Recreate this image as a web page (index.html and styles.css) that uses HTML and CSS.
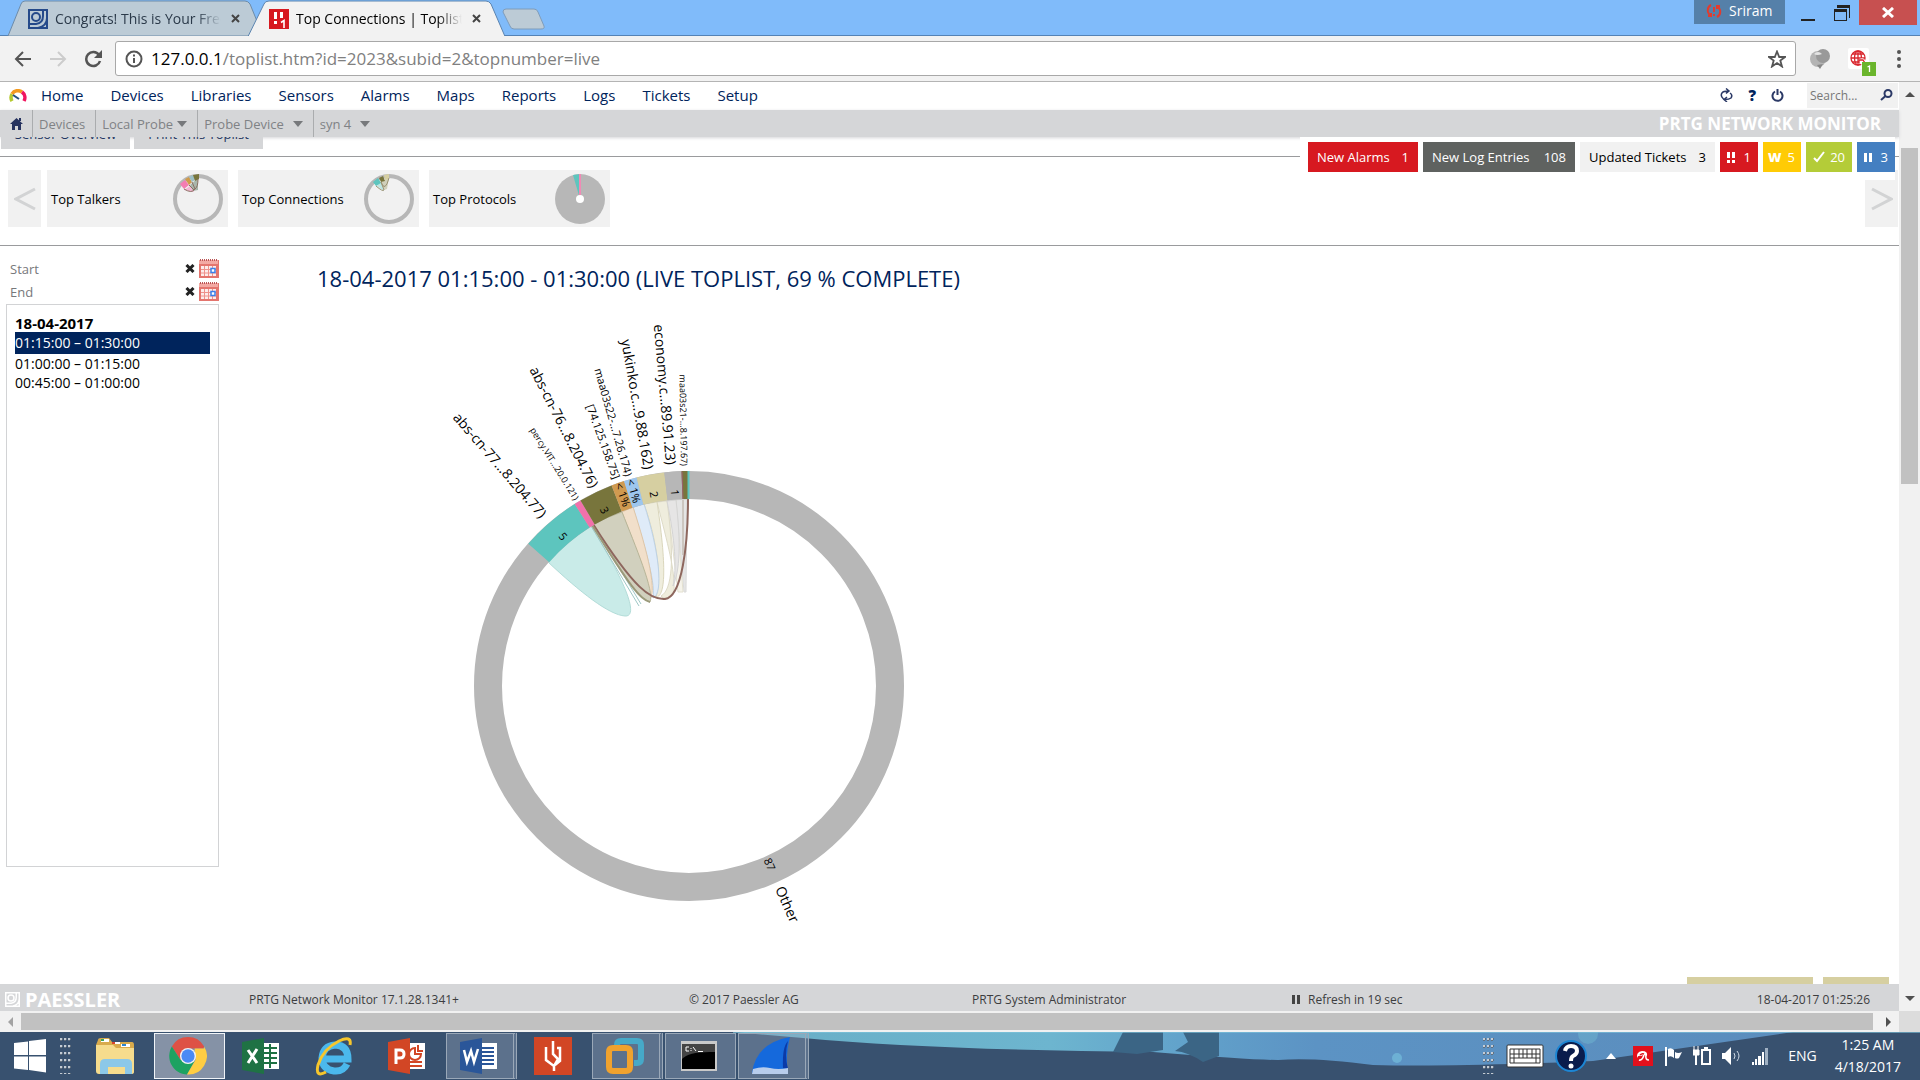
FILE: index.html
```
<!DOCTYPE html>
<html lang="en">
<head>
<meta charset="utf-8">
<title>Top Connections | Toplist</title>
<link rel="stylesheet" href="styles.css">
</head>
<body>
<header class="tabstrip">
  <svg class="tab-shapes" width="560" height="36" viewBox="0 0 560 36" aria-hidden="true">
    <path d="M8 36L21 4Q22 1 25 1H245Q248 1 250 4L263 36Z" fill="#bccbd6" stroke="#6d8ba8"/>
    <path d="M503 12Q503 9 506 9H534Q537 9 538 12L544 26Q545 29 541 29H514Q511 29 510 26Z" fill="#bccbd6" stroke="#7f9cba"/>
    <path d="M248 36.500L264 4Q265 1 269 1H486Q489 1 491 4L505 36.500Z" fill="#f2f2f2" stroke="#5b84b0"/>
  </svg>
  <div class="tab tab-back">
    <svg width="20" height="20" viewBox="0 0 20 20" fill="none" stroke="#254a8a" stroke-width="2"><path d="M1 1H19V19H1ZM1 15H8Q15 14 15 7V1M10 19Q19 17 19 9"/><circle cx="8" cy="8" r="4"/></svg>
    <span class="tab-title">Congrats! This is Your Free</span>
    <button class="tab-close" aria-label="Close tab"><svg width="9" height="9" viewBox="0 0 9 9"><path d="M1 1L8 8M8 1L1 8" stroke="#444" stroke-width="2"/></svg></button>
  </div>
  <div class="tab">
    <svg width="20" height="20" viewBox="0 0 20 20"><path fill="#d71920" d="M0 0H20V20H0Z"/><path fill="#fff" d="M5 3H8V10H5ZM11 3H14V9H11ZM5 12H8V15H5Z"/><path d="M12 13.500L15 11.500V19" stroke="#fff" stroke-width="1.600" fill="none"/></svg>
    <span class="tab-title">Top Connections | Toplist</span>
    <button class="tab-close" aria-label="Close tab"><svg width="9" height="9" viewBox="0 0 9 9"><path d="M1 1L8 8M8 1L1 8" stroke="#444" stroke-width="2"/></svg></button>
  </div>
  <div class="window-controls">
    <button class="profile"><svg width="16" height="16" viewBox="0 0 16 16" fill="none" stroke="#e23b2e" stroke-width="2"><path d="M5 2Q1 4 2 9Q3 12 5 13M2 13H5V10M11 14Q15 12 14 7Q13 4 11 3M14 3H11V6"/><path d="M8 4V9M8 11V13"/></svg>Sriram</button>
    <button class="win" aria-label="Minimize"><svg width="14" height="20" viewBox="0 0 14 20"><path fill="#222" d="M0 16H14V18H0Z"/></svg></button>
    <button class="win" aria-label="Restore"><svg width="16" height="16" viewBox="0 0 16 16"><path d="M3 0H16V13H15V3H3ZM0 4H13V16H0ZM1 7V15H12V7Z" fill="#222" fill-rule="evenodd"/></svg></button>
    <button class="win close" aria-label="Close"><svg width="12" height="11" viewBox="0 0 12 11"><path d="M1 1L11 10M11 1L1 10" stroke="#fff" stroke-width="3"/></svg></button>
  </div>
</header>

<div class="toolbar">
  <button aria-label="Back"><svg width="18" height="16" viewBox="0 0 18 16" fill="none" stroke="#555" stroke-width="2"><path d="M17 8H2M9 1L2 8L9 15"/></svg></button>
  <button aria-label="Forward"><svg width="18" height="16" viewBox="0 0 18 16" fill="none" stroke="#ccc" stroke-width="2"><path d="M1 8H16M9 1L16 8L9 15"/></svg></button>
  <button aria-label="Reload"><svg width="19" height="18" viewBox="0 0 19 18"><path d="M15 5A7 7 0 1 0 16 11" fill="none" stroke="#555" stroke-width="2.500"/><path d="M18 0V8H10Z" fill="#555"/></svg></button>
  <div class="address">
    <svg width="18" height="18" viewBox="0 0 18 18" fill="none" stroke="#555" stroke-width="2"><circle cx="9" cy="9" r="7.500"/><path d="M9 8V13M9 4.500V6.500"/></svg>
    <span class="url"><b>127.0.0.1</b>/toplist.htm?id=2023&amp;subid=2&amp;topnumber=live</span>
    <svg width="18" height="18" viewBox="0 0 18 18" fill="none" stroke="#555" stroke-width="1.800"><path d="M9 1.500L11.200 7H17L12.300 10.500L14 16.500L9 13L4 16.500L5.700 10.500L1 7H6.800Z"/></svg>
  </div>
  <button aria-label="Extension"><svg width="22" height="20" viewBox="0 0 22 20"><circle cx="9" cy="10" r="8" fill="#b4b4b4"/><circle cx="14" cy="7" r="7" fill="#999"/><path d="M5 5Q9 1 13 5Q8 7 5 5" fill="#e4e4e4"/><path d="M8 16L14 15L11 20Z" fill="#888"/></svg></button>
  <button class="ext2" aria-label="Extension"><svg width="28" height="28" viewBox="0 0 28 28"><rect width="21" height="21" rx="2" fill="#fff"/><g fill="none" stroke="#d9272e" stroke-width="1.300"><circle cx="10" cy="10" r="7"/><ellipse cx="10" cy="10" rx="3.500" ry="7"/><path d="M3 10H17M4.500 6H15.500M4.500 14H15.500M10 3V17"/></g><path d="M11 12Q13 9 16 11L18 13L14 17L11 15Z" fill="#fff"/><path d="M11 15V12H15L17 15" fill="none" stroke="#d9272e" stroke-width="1.300"/><rect x="14" y="14" width="14" height="14" fill="#6ab52c"/><path d="M19.500 19L21.500 18V24" stroke="#fff" stroke-width="1.300" fill="none"/></svg></button>
  <button class="more" aria-label="Menu"><svg width="4" height="18" viewBox="0 0 4 18" fill="#555"><circle cx="2" cy="2" r="2"/><circle cx="2" cy="9" r="2"/><circle cx="2" cy="16" r="2"/></svg></button>
</div>

<div class="viewport">
  <div class="page">
    <nav class="nav">
      <svg class="brand" width="18" height="13" viewBox="0 0 18 13" fill="none" stroke-width="3.500"><path d="M3 12A7 7 0 0 1 3 5" stroke="#b5c92f"/><path d="M3 5A7 7 0 0 1 13 3" stroke="#f39a1f"/><path d="M13 3A7 7 0 0 1 15 12" stroke="#f0155e"/><path d="M4 6L10 10" stroke="#26507f" stroke-width="2"/></svg>
      <a href="#">Home</a><a href="#">Devices</a><a href="#">Libraries</a><a href="#">Sensors</a><a href="#">Alarms</a><a href="#">Maps</a><a href="#">Reports</a><a href="#">Logs</a><a href="#">Tickets</a><a href="#">Setup</a>
      <div class="tools">
        <button aria-label="Refresh"><svg width="13" height="14" viewBox="0 0 13 14" fill="none" stroke="#2b3966" stroke-width="1.500"><path d="M3.500 11Q0 8 2 5Q3 3 9 3M6 0.500L9 3L6 5.500M10 5Q13 7 11 10Q9 11.500 5 11.500M7 9L4 11.500L7 14"/></svg></button>
        <button class="q" aria-label="Help">?</button>
        <button aria-label="Log out"><svg width="13" height="13" viewBox="0 0 13 13" fill="none" stroke="#2b3966" stroke-width="2"><path d="M4 2.500A5 5 0 1 0 9 2.500M6.500 0V6"/></svg></button>
      </div>
      <label class="search"><input type="text" placeholder="Search..." aria-label="Search"><svg width="13" height="12" viewBox="0 0 13 12" fill="none" stroke="#2b3966" stroke-width="2"><circle cx="8" cy="4.500" r="3.500"/><path d="M5.500 7L1 11"/></svg></label>
    </nav>
    <div class="crumbs">
      <a href="#" class="c-home" aria-label="Home"><svg width="13" height="12" viewBox="0 0 13 12" fill="#26335f"><path d="M6.500 0L13 6H11V12H8V8H5V12H2V6H0ZM9 0H11V3H9Z"/></svg></a>
      <a href="#">Devices</a>
      <a href="#">Local Probe<i class="caret"></i></a>
      <a href="#">Probe Device<i class="caret wide"></i></a>
      <a href="#">syn 4<i class="caret wide"></i></a>
      <span class="product">PRTG NETWORK MONITOR</span>
    </div>
    <div class="content">
      <div class="actions">
        <button>Sensor Overview</button><button>Print This Toplist</button>
        <div class="ghosts"><i></i><i></i><i></i><i></i><i></i><i></i></div>
      </div>
      <div class="badges">
        <a href="#" class="red w-alarms">New Alarms <span>1</span></a>
        <a href="#" class="dark w-log">New Log Entries <span>108</span></a>
        <a href="#" class="light w-tickets">Updated Tickets <span>3</span></a>
        <a href="#" class="red small"><svg width="9" height="11" viewBox="0 0 9 11" fill="#fff"><path d="M0 0H3V6H0ZM0 8H3V11H0ZM5 0H8V6H5ZM5 8H8V11H5Z"/></svg>1</a>
        <a href="#" class="yellow small"><b>W</b>5</a>
        <a href="#" class="green small"><svg width="12" height="12" viewBox="0 0 12 12" fill="none" stroke="#fff" stroke-width="2"><path d="M1 7L4 10L11 1"/></svg>20</a>
        <a href="#" class="blue small"><svg width="8" height="9" viewBox="0 0 8 9" fill="#fff"><path d="M0 0H3V9H0ZM5 0H8V9H5Z"/></svg>3</a>
      </div>
      <div class="strip">
        <button class="arrow" aria-label="Previous"><svg width="22" height="24" viewBox="0 0 22 24"><path d="M21 2L2 12L21 22" fill="none" stroke="#d2d3d4" stroke-width="3"/></svg></button>
        <a href="#" class="tile">Top Talkers
          <svg width="52" height="52" viewBox="0 0 52 52"><circle cx="26" cy="26" r="23" fill="none" stroke="#b7b7b7" stroke-width="4"/><path d="M12 17L18 13L22 19Z" fill="#f5b5d3"/><path d="M18 12L26 5V17L21 18Z" fill="#a9b6ab"/><path d="M8 11L13 7L17 12L12 16Z" fill="#f47cb2"/><path d="M13 6L17 4L20 9L17 12Z" fill="#cf9a4b"/><path d="M17 4L21 2L23 7L20 9Z" fill="#9cbfc4"/><path d="M21 2L27 1V6L23 8Z" fill="#78753c"/><path d="M12 16Q20 21 23 16Q26 14 26 6M17 12L22 17M20 9L23 16" fill="none" stroke="#8a6f62"/></svg></a>
        <a href="#" class="tile">Top Connections
          <svg width="52" height="52" viewBox="0 0 52 52"><circle cx="26" cy="26" r="23" fill="none" stroke="#b7b7b7" stroke-width="4"/><path d="M14 13L18 9L21 18Z" fill="#bde6e2"/><path d="M18 9L26 5L24 16L21 17Z" fill="#d0d0bb"/><path d="M10 9L15 5L18 10L13 13Z" fill="#5dc5be"/><path d="M16 5L20 3L22 8L18 9Z" fill="#78753c"/><path d="M21 2L26 1V6L22 7Z" fill="#d6cfa1"/><path d="M13 13Q20 19 21 17L18 9Q22 20 26 5" fill="none" stroke="#9a9272"/></svg></a>
        <a href="#" class="tile">Top Protocols
          <svg width="52" height="52" viewBox="0 0 52 52"><circle cx="26" cy="26" r="25" fill="#b7b7b7"/><path d="M26 26L19 2L26 1Z" fill="#5dc5be"/><path d="M25 1H27V22H25Z" fill="#f08ab5"/><circle cx="26" cy="26" r="4" fill="#fff"/></svg></a>
        <button class="arrow next" aria-label="Next"><svg width="22" height="24" viewBox="0 0 22 24"><path d="M1 2L20 12L1 22" fill="none" stroke="#d2d3d4" stroke-width="3"/></svg></button>
      </div>
      <main class="main">
        <aside class="side">
          <div class="field"><label for="start">Start</label><input id="start" type="text"><button aria-label="Clear start"><svg width="10" height="9"><use href="#x"/></svg></button><button aria-label="Pick start"><svg width="20" height="19"><use href="#cal"/></svg></button></div>
          <div class="field"><label for="end">End</label><input id="end" type="text"><button aria-label="Clear end"><svg width="10" height="9"><use href="#x"/></svg></button><button aria-label="Pick end"><svg width="20" height="19"><use href="#cal"/></svg></button></div>
          <div class="list">
            <h2>18-04-2017</h2>
            <a href="#" class="on">01:15:00 – 01:30:00</a>
            <a href="#">01:00:00 – 01:15:00</a>
            <a href="#">00:45:00 – 01:00:00</a>
          </div>
        </aside>
        <section class="chart">
          <h1>18-04-2017 01:15:00 - 01:30:00 (LIVE TOPLIST, 69 % COMPLETE)</h1>
          <svg class="ring" width="480" height="620" viewBox="440 310 480 620">
            <g stroke-width="1">
              <path d="M548 562C580 592 609 615 625 616C636 617 634 596 591 526A187 187 0 0 0 548 562Z" fill="#c9ebe8" stroke="#b2dcd8"/>
              <path d="M591 526L639 606M593 525L641 604" stroke="#9fc8c6" fill="none"/>
              <path d="M676 500L684 592H686L687 499Z" fill="#e5e5e5" stroke="#dadada"/>
              <path d="M667 501L678 592H683L676 500Z" fill="#f5f3ea" stroke="#e3e0d0"/>
              <path d="M657 502C668 545 675 570 674 590C672 598 664 600 661 596C672 590 675 560 667 501Z" fill="#efeddd" stroke="#dedbc8"/>
              <path d="M667 501C675 540 677 568 673 586C680 570 681 545 676 500Z" fill="#e6e5e5" stroke="#d4d4d4"/>
              <path d="M644 504C657 540 662 580 656 597C664 597 668 575 657 502Z" fill="#efeddd" stroke="#dad6bc"/>
              <path d="M633 507C642 540 656 580 653 598C664 594 659 550 644 504Z" fill="#dfebf8" stroke="#bdd2e6"/>
              <path d="M622 512C634 545 652 585 648 601C659 596 647 550 633 507Z" fill="#f1dfca" stroke="#dec6a8"/>
              <path d="M593 523C615 560 638 600 650 602C655 592 635 545 622 512Z" fill="#d1d0be" stroke="#b7b598"/>
              <path d="M593 524C635 590 651 600 665 599C682 597 688 545 688 499" fill="none" stroke="#8e675e" stroke-width="2"/>
              <path d="M592 525C632 590 641 600 650 602" fill="none" stroke="#9a997a" stroke-width="2"/>
              <path d="M683 500V555" stroke="#b3a79a"/>
            </g>
            <circle cx="689" cy="686" r="201" fill="none" stroke-width="28" stroke="#b7b7b7"/>
            <g>
              <path fill="#5dc5be" d="M528.300 543.800A215 215 0 0 1 574.700 503.900L589.600 527.600A187 187 0 0 0 549.200 562.300Z"/>
              <path fill="#f171ab" d="M574.700 503.900A215 215 0 0 1 580.500 500.400L594.700 524.500A187 187 0 0 0 589.600 527.600Z"/>
              <path fill="#78753c" d="M580.500 500.400A215 215 0 0 1 611.600 485.400L621.700 511.500A187 187 0 0 0 594.700 524.500Z"/>
              <path fill="#d09a50" d="M611.600 485.400A215 215 0 0 1 624 481.100L632.500 507.800A187 187 0 0 0 621.700 511.500Z"/>
              <path fill="#9dc6ee" d="M624 481.100A215 215 0 0 1 636.600 477.500L643.400 504.600A187 187 0 0 0 632.500 507.800Z"/>
              <path fill="#d6cfa1" d="M636.600 477.500A215 215 0 0 1 664.300 472.400L667.500 500.200A187 187 0 0 0 643.400 504.600Z"/>
              <path fill="#b7b7b7" d="M664.300 472.400A215 215 0 0 1 681.500 471.100L682.500 499.100A187 187 0 0 0 667.500 500.200Z"/>
              <path fill="#78753c" d="M681.500 471.100L688 471V499L682.500 499.100Z"/>
              <path fill="#5dc5be" d="M687.500 471H689.500V499H687.500Z"/>
              <path d="M682 471.500L683 499" stroke="#9a5f6c"/>
            </g>
            <g class="lbl">
              <g text-anchor="end" font-size="14">
                <text transform="translate(540 519) rotate(49)">abs-cn-77...8.204.77)</text>
                <text transform="translate(590 489) rotate(63)">abs-cn-76...8.204.76)</text>
                <text transform="translate(644 470) rotate(80)">yukinko.c...9.88.162)</text>
                <text transform="translate(666 465) rotate(85)">economy.c...89.91.23)</text>
              </g>
              <g text-anchor="end" font-size="11">
                <text transform="translate(613 480) rotate(70)">[74.125.158.75]</text>
                <text transform="translate(625 477) rotate(74)">maa03s22-...7.26.174)</text>
              </g>
              <g text-anchor="end" font-size="9">
                <text transform="translate(574 501) rotate(58)">percy.VIT...20.0.121)</text>
                <text transform="translate(681 466) rotate(89)">maa03s21-...8.197.67)</text>
              </g>
              <text font-size="14" transform="translate(775 889) rotate(66)">Other</text>
              <g text-anchor="middle" font-size="11">
                <text transform="translate(560 539) rotate(50)">5</text>
                <text transform="translate(601 512) rotate(63)">3</text>
                <text transform="translate(619 496) rotate(70)">&lt; 1%</text>
                <text transform="translate(630 492) rotate(74)">&lt; 1%</text>
                <text transform="translate(650 495) rotate(80)">2</text>
                <text transform="translate(671 493) rotate(86)">1</text>
                <text transform="translate(766 866) rotate(66)">87</text>
              </g>
            </g>
          </svg>
        </section>
      </main>
      <div class="peek"><i></i><i></i></div>
    </div>
    <footer class="foot">
      <span class="maker"><svg width="15" height="15" viewBox="0 0 20 20" fill="none" stroke="#fff" stroke-width="2"><path d="M1 1H19V19H1ZM1 15H8Q15 14 15 7V1M10 19Q19 17 19 9"/><circle cx="8" cy="8" r="4"/></svg>PAESSLER</span>
      <span>PRTG Network Monitor 17.1.28.1341+</span>
      <span>© 2017 Paessler AG</span>
      <span>PRTG System Administrator</span>
      <span class="refresh"><svg width="8" height="9" viewBox="0 0 8 9" fill="#444"><path d="M0 0H3V9H0ZM5 0H8V9H5Z"/></svg>Refresh in 19 sec</span>
      <span>18-04-2017 01:25:26</span>
    </footer>
  </div>
  <div class="vscroll"><i class="up"></i><div class="thumb"></div><i class="down"></i></div>
</div>
<div class="hscroll"><i class="left"></i><div class="thumb"></div><i class="right"></i><div class="corner"></div></div>

<div class="taskbar">
  <svg class="wallpaper" viewBox="0 0 1187 48" preserveAspectRatio="none" aria-hidden="true">
    <defs><linearGradient id="sky"><stop offset="0" stop-color="#69aec6"/><stop offset=".3" stop-color="#6db5cf"/><stop offset=".42" stop-color="#62a3cb"/><stop offset=".55" stop-color="#5c93c4"/><stop offset="1" stop-color="#5b8dbd"/></linearGradient></defs>
    <path fill="url(#sky)" d="M0 0L70 6Q200 18 420 20Q520 28 545 28Q580 25 640 33Q720 35 860 29L1060 0Z"/>
    <path fill="#3b6585" d="M390 0H430V18L404 22L380 20ZM450 0H486V24L470 30Q455 20 442 19L455 10Z"/>
    <circle cx="664" cy="26" r="5" fill="#72b8d8" opacity=".8"/><circle cx="855" cy="2" r="10" fill="#70b6cf" opacity=".5"/>
    <path fill="none" stroke="#7ec4dc" stroke-opacity=".6" d="M0 0.500H1187"/>
  </svg>
  <button class="start" aria-label="Start"><svg width="32" height="34" viewBox="0 0 32 34" fill="#fff"><path d="M0 4L14 2.500V16H0ZM15 2L32 0V16H15ZM0 17.500H14V31L0 29.500ZM15 17.500H32V33.500L15 31Z"/></svg></button>
  <span class="grip"></span>
  <button class="task" aria-label="File Explorer"><svg width="40" height="40" viewBox="0 0 40 40"><path fill="#d9ab4c" d="M3 4Q3 2 6 2H14L17 6H37Q39 6 39 9V34H1V9Z"/><path fill="#fff" d="M6 3H14V6H6ZM17 6H25V8H17ZM26 8H35V11H26Z"/><path fill="#3ca35a" d="M6 3H9V5H6Z"/><path fill="#d6442e" d="M17 6H20V8H17Z"/><path fill="#2d86d0" d="M27 8H31V10H27Z"/><path fill="#f6dc8d" d="M1 9H18L21 12H39V36Q39 38 36 38H4Q1 38 1 35Z"/><path fill="#8cc8e8" d="M5 38V28Q5 23 10 23H32Q37 23 37 28V38H30V31H13V38Z"/></svg></button>
  <button class="task on bright" aria-label="Chrome"><svg width="38" height="38" viewBox="0 0 40 40"><path fill="#de5145" d="M3 10A19.500 19.500 0 0 1 37 10L36 12H20L12 24Z"/><path fill="#1da261" d="M3 10A19.500 19.500 0 0 0 19 39.500L27 25L12 24Z"/><path fill="#ffcd42" d="M37 10A19.500 19.500 0 0 1 19 39.500L28 24L27 12H37Z"/><circle cx="20" cy="20" r="8.500" fill="#f2f2f2"/><circle cx="20" cy="20" r="7" fill="#4a8af4"/></svg></button>
  <button class="task" aria-label="Excel"><svg width="38" height="36" viewBox="0 0 38 36"><path fill="#fff" d="M20 5H37V31H20Z"/><path fill="none" stroke="#1f7244" stroke-width="2" d="M20 10H35M20 15H35M20 20H35M20 25H35M28 6V30"/><path fill="#1f7244" d="M0 4L22 0V36L0 32Z"/><path d="M6 12L15 25M15 11L6 25" stroke="#fff" stroke-width="3"/></svg></button>
  <button class="task" aria-label="Internet Explorer"><svg width="40" height="40" viewBox="0 0 40 40" fill="none"><path d="M33 28Q29 36 20 35Q8 33 8 22Q9 10 21 9Q34 9 34 23H11" stroke="#4bb8ec" stroke-width="7"/><path d="M12 36Q1 42 4 29Q9 13 25 5Q38 -1 36 9" stroke="#f6c62c" stroke-width="3"/></svg></button>
  <button class="task" aria-label="PowerPoint"><svg width="38" height="36" viewBox="0 0 38 36"><path fill="#fff" d="M20 5H37V31H20Z"/><path fill="none" stroke="#d24625" stroke-width="2" d="M22 24H34M22 28H34"/><path fill="none" stroke="#d24625" stroke-width="2" d="M27 10A6 6 0 1 0 33 16H27ZM30 7V13H35"/><path fill="#d24625" d="M0 4L22 0V36L0 32Z"/><path d="M8 26V12H12Q16 12 16 16Q16 20 12 20H8" stroke="#fff" stroke-width="3" fill="none"/></svg></button>
  <button class="task on many" aria-label="Word"><svg width="38" height="36" viewBox="0 0 38 36"><path fill="#fff" d="M20 5H37V31H20Z"/><path fill="none" stroke="#2a5699" stroke-width="2" d="M22 10H34M22 14H34M22 18H34M22 22H34M22 26H34"/><path fill="#2a5699" d="M0 4L22 0V36L0 32Z"/><path d="M4 12L7 24L11 13L14 24L18 11" stroke="#fff" stroke-width="2.500" fill="none"/></svg></button>
  <button class="task" aria-label="Reader"><svg width="38" height="38" viewBox="0 0 38 38"><path fill="#d24625" d="M0 0H38V38H0Z"/><path d="M12 10V23L20 29V34M19 4V17L24 22L20 29M19 17V10M21 28L26 24V11H23" stroke="#fff" stroke-width="2.500" fill="none"/></svg></button>
  <button class="task on many" aria-label="VMware"><svg width="38" height="38" viewBox="0 0 38 38" fill="none" stroke-width="6"><path d="M11 14V8Q11 4 15 4H31Q35 4 35 8V22Q35 26 31 26H28" stroke="#46a9c8"/><path d="M7 11H20Q24 11 24 15V30Q24 34 20 34H7Q3 34 3 30V15Q3 11 7 11Z" stroke="#f0a22e"/></svg></button>
  <button class="task on" aria-label="Command Prompt"><svg width="36" height="30" viewBox="0 0 36 30"><path fill="#c9c9c9" d="M0 0H36V30H0Z"/><path d="M1 3H34V28H1Z"/><path fill="#444" d="M1 3H34V11Q8 10 1 18Z"/><path fill="none" stroke="#fff" d="M8 6H5V10H8M10 7V8M10 9V10M12 6L15 10M17 10.500H22"/></svg></button>
  <button class="task on many" aria-label="Wireshark"><svg width="38" height="38" viewBox="0 0 38 38"><path fill="#1569dc" d="M0 36Q4 6 38 0Q33 20 36 36Z"/><path fill="#0b3ba8" d="M36 4Q30 10 31 31L36 32Q32 18 36 4Z"/><path fill="#b8cdec" d="M1 32Q10 29 18 31T36 31V37H0Z"/></svg></button>
  <div class="tray">
    <span class="grip"></span>
    <button aria-label="Keyboard"><svg width="38" height="24" viewBox="0 0 38 24"><rect x="1" y="1" width="36" height="22" rx="1" fill="#fff" stroke="#333"/><path d="M4 5H34V19H4ZM4 10H34M4 14H34M8 5V19M13 5V14M17 5V14M21 5V14M26 5V14M30 5V19" fill="none" stroke="#333"/></svg></button>
    <button aria-label="Help"><svg width="32" height="32" viewBox="0 0 32 32"><circle cx="16" cy="16" r="15" fill="#0a1c4c" stroke="#1d86d4" stroke-width="2"/><path d="M10 11Q11 6 16 6Q22 6 22 11Q22 14 18 16Q16 17 16 21" fill="none" stroke="#fff" stroke-width="4"/><circle cx="16" cy="26" r="2.500" fill="#fff"/></svg></button>
    <button class="t-up" aria-label="Show hidden icons"><svg width="10" height="6"><path d="M0 6L5 0L10 6Z" fill="#fff"/></svg></button>
    <button aria-label="Antivirus"><svg width="20" height="20" viewBox="0 0 20 20"><path fill="#e2101c" d="M0 0H20V20H0Z"/><path d="M4 12Q3 6 9 5Q15 5 14 10Q11 8 8 10Q5 9 4 12" fill="#fff"/><path d="M11 9Q9 15 6 14M13 9Q12 14 16 14" fill="none" stroke="#fff" stroke-width="1.600"/><path d="M7 9Q9 7 11 8" fill="none" stroke="#e2101c" stroke-width="1.500"/></svg></button>
    <button aria-label="Action Center"><svg width="18" height="19" viewBox="0 0 18 19" fill="#fff"><path d="M1 0H3V19H1ZM4 2Q7 0 10 3V11Q7 8 4 10ZM11 5Q14 7 18 5L16 9L15 11Q13 12 11 11Z"/></svg></button>
    <button aria-label="Battery"><svg width="18" height="20" viewBox="0 0 18 20" fill="none" stroke="#fff" stroke-width="2"><path d="M9 4H17V18H9ZM11 2H15M3 9V19"/><path d="M0 4H6V9H0ZM1 0V4M5 0V4" fill="#fff" stroke-width="1"/></svg></button>
    <button aria-label="Volume"><svg width="19" height="18" viewBox="0 0 19 18"><path fill="#fff" d="M0 6H3L9 0V18L3 12H0Z"/><path d="M12 6Q14 9 12 12M15 4Q19 9 15 14" stroke="#cfdae6" fill="none"/></svg></button>
    <button aria-label="Network"><svg width="16" height="17" viewBox="0 0 16 17" fill="#fff"><path d="M0 14H2V17H0ZM3 11H5V17H3ZM6 8H9V17H6ZM10 4H12V17H10Z"/><path d="M13 0H16V17H13Z" fill="#9fb0c2"/></svg></button>
    <span class="lang">ENG</span>
    <time class="clock">1:25 AM<br>4/18/2017</time>
  </div>
</div>
<svg width="0" height="0" class="defs" aria-hidden="true">
  <symbol id="x" viewBox="0 0 10 9"><path d="M1.500 1L8.500 8M8.500 1L1.500 8" stroke="#222" stroke-width="3"/></symbol>
  <symbol id="cal" viewBox="0 0 20 19"><path fill="#e4756e" d="M0 1H20V19H0Z"/><path fill="#f3a9a3" d="M0 1H19V5H0Z"/><path fill="#fdeceb" d="M2 7H17V17H2Z"/><path d="M2 10.500H17M2 14H17M5.500 7V17M9.500 7V17M13.500 7V17" stroke="#ee928c"/><path d="M1 1H19" stroke="#b55" stroke-dasharray="1 1" stroke-width="2"/><path d="M12 9.500H16V13.500H12Z" fill="#fff" stroke="#3d7fe8" stroke-width="1.500"/></symbol>
</svg>
</body>
</html>
```
FILE: styles.css
```
* { box-sizing: border-box; }
body {
  margin: 0;
  min-height: 100vh;
  display: flex;
  flex-direction: column;
  font: 13px/16px "Open Sans", "Noto Sans", sans-serif;
  color: #000;
  background: #fff;
  overflow-x: hidden;
}
button { font: inherit; border: 0; padding: 0; background: none; color: inherit; display: flex; align-items: center; }
a { color: inherit; text-decoration: none; }
svg { flex: none; display: block; }
h1, h2 { margin: 0; }
.defs { position: absolute; }

/* window frame */
.tabstrip { position: relative; display: flex; height: 36px; background: #80bbfa; border-bottom: 1px solid #5482b5; }
.tab-shapes { position: absolute; left: 0; top: 0; }
.tab { position: relative; display: flex; align-items: center; width: 241px; padding: 2px 0 0 28px; font-size: 14px; line-height: 20px; }
.tab-back { color: #2b3a4a; }
.tab-title { width: 166px; margin-left: 7px; overflow: hidden; white-space: nowrap; mask-image: linear-gradient(90deg, #000 85%, transparent); }
.tab-close { margin-left: 10px; }
.window-controls { position: relative; display: flex; align-items: flex-start; margin-left: auto; padding-right: 3px; }
.profile { height: 24px; width: 91px; gap: 7px; padding: 0 0 3px 12px; background: #5580a9; color: #fff; font-size: 14px; margin-right: 6px; }
.win { height: 25px; width: 34px; justify-content: center; }
.close { width: 58px; background: #c75050; }

.toolbar { display: flex; align-items: center; height: 46px; padding: 0 19px 0 14px; background: #f2f2f2; border-bottom: 1px solid #b4b4b4; }
.toolbar > button { margin-right: 17px; }
.address { flex: 1; display: flex; align-items: center; height: 35px; margin-left: -5px; margin-right: 13px; padding: 0 9px; background: #fff; border: 1px solid #a8a8a8; border-radius: 3px; }
.url { flex: 1; margin-left: 8px; font-size: 17px; line-height: 24px; color: #808080; }
.url b { font-weight: 400; color: #000; }
.toolbar .ext2 { padding-top: 7px; margin-right: 21px; }
.toolbar .more { margin-right: 0; }

/* page */
.viewport { flex: 1; display: flex; }
.page { flex: 1; min-width: 0; display: flex; flex-direction: column; }
.nav { display: flex; align-items: center; height: 28px; padding: 0 1px 2px 9px; font-size: 15px; line-height: 20px; color: #00245c; gap: 27px; }
.brand { margin-right: -13px; }
.nav a { white-space: nowrap; }
.tools { display: flex; align-items: center; gap: 15px; margin-left: auto; margin-right: -4px; }
.q { font-weight: 800; }
.search { display: flex; align-items: center; width: 91px; height: 25px; padding: 0 5px 0 3px; background: #f1f1f1; }
.search input { flex: 1; width: 60px; min-width: 0; border: 0; padding: 0; background: none; font: 12px "Open Sans", sans-serif; color: #777; }
.search input::placeholder { color: #777; opacity: 1; }

.crumbs { display: flex; align-items: stretch; height: 27px; background: #d5d6d8; color: #808285; line-height: 28px; box-shadow: 0 1px 3px #d5d6d8; position: relative; }
.crumbs a { display: flex; align-items: center; padding: 0 10px 0 6px; border-left: 1px solid #aaacae; }
.crumbs .c-home { padding: 0 9px 0 10px; border-left: 0; }
.caret { border: 5px solid transparent; border-top: 6px solid #77797c; border-bottom: 0; margin-left: 4px; }
.caret.wide { margin-left: 9px; }
.product { margin-left: auto; padding-right: 18px; font-weight: 700; font-size: 17px; line-height: 27px; color: #fff; }

.content { position: relative; flex: 1; display: flex; flex-direction: column; }
.actions { display: flex; align-items: flex-end; gap: 4px; height: 12px; padding-left: 1px; overflow: hidden; color: #1f3562; }
.actions button { height: 32px; width: 129px; justify-content: center; align-items: flex-end; padding-bottom: 6px; background: #d5d6d8; white-space: nowrap; line-height: 17px; }
.ghosts { display: flex; gap: 4px; align-self: flex-start; margin-left: auto; margin-right: 14px; }
.ghosts i { width: 21px; height: 4px; background: #7d90b0; }

.badges { position: absolute; z-index: 1; right: 4px; top: 0; display: flex; gap: 5px; padding: 5px 0 8px 8px; background: #fff; }
.badges a { display: flex; align-items: center; justify-content: space-between; height: 30px; padding: 0 9px; white-space: nowrap; color: #fff; }
.badges .w-alarms { width: 110px; }
.badges .w-log { width: 152px; }
.badges .w-tickets { width: 135px; }
.badges .small { width: 38px; padding: 0 7px; }
.badges b { font-weight: 800; }
.badges .red { background: #d71920; }
.badges .dark { background: #5f6260; }
.badges .light { background: #f1f1f1; color: #000; }
.badges .yellow { background: #ffcb05; padding: 0 6px 0 5px; }
.badges .green { background: #b4cc38; width: 46px; }
.badges .blue { background: #447fc1; }

.strip { display: flex; align-items: center; gap: 10px; margin-top: 7px; height: 90px; padding: 0 1px 5px 8px; border-top: 1px solid #9a9b9d; border-bottom: 1px solid #9a9b9d; }
.arrow { width: 33px; height: 57px; justify-content: center; background: #f1f1f1; margin-right: -4px; }
.next { margin-left: auto; margin-right: 0; }
.tile { display: flex; align-items: center; justify-content: space-between; width: 181px; height: 57px; padding: 0 4px; background: #f1f1f1; }

.main { flex: 1; display: flex; }
.side { width: 219px; padding: 11px 0 0 6px; display: flex; flex-direction: column; color: #77787b; }
.field { display: flex; align-items: center; height: 23px; padding-left: 4px; }
.field label { width: 46px; }
.field input { flex: 1; min-width: 0; height: 20px; border: 0; padding: 0; background: none; }
.field button { margin-left: 4px; }
.list { height: 563px; margin-top: 1px; padding: 9px 8px; border: 1px solid #d2d3d5; color: #000; }
.list h2 { font-size: 15px; line-height: 18px; }
.list a { display: block; font-size: 14px; line-height: 19px; white-space: nowrap; }
.list .on { line-height: 22px; background: #00245c; color: #fff; }
.chart { flex: 1; padding: 18px 0 0 98px; }
.chart h1 { font-size: 22px; line-height: 28px; font-weight: 400; color: #00245c; }
.ring { margin: 18px 0 0 123px; }
.lbl { font-family: "Open Sans", sans-serif; }
.peek { display: flex; justify-content: flex-end; gap: 10px; height: 7px; padding-right: 10px; }
.peek i { width: 126px; background: #d6cfa1; }
.peek i + i { width: 66px; }

.foot { display: grid; grid-template-columns: 244px 440px 283px 320px 1fr auto; align-items: center; height: 27px; padding: 4px 29px 0 5px; background: #d5d6d8; color: #3c3d3f; font-size: 12px; line-height: 23px; white-space: nowrap; }
.foot svg { margin-right: 8px; }
.maker, .refresh { display: flex; align-items: center; }
.foot .maker { font-weight: 700; font-size: 20px; color: #fff; }
.foot .maker svg { margin-right: 5px; }

/* scrollbars */
.vscroll { width: 21px; display: flex; flex-direction: column; align-items: center; background: #f1f1f1; padding: 10px 1px; }
.vscroll .thumb { width: 17px; height: 336px; margin-top: 51px; margin-bottom: auto; background: #c1c1c1; }
.vscroll .up { border: 5px solid transparent; border-bottom: 5px solid #505050; border-top: 0; }
.vscroll .down { border: 5px solid transparent; border-top: 5px solid #505050; border-bottom: 0; }
.hscroll { display: flex; align-items: center; height: 21px; background: #f1f1f1; padding-left: 8px; }
.hscroll .left { border: 5px solid transparent; border-right: 5px solid #a3a3a3; border-left: 0; margin-right: 8px; }
.hscroll .thumb { flex: 1; height: 17px; background: #c1c1c1; }
.hscroll .right { border: 5px solid transparent; border-left: 5px solid #505050; border-right: 0; margin: 0 8px 0 13px; }
.hscroll .corner { width: 21px; height: 21px; background: #dcdcdc; }

/* taskbar */
.taskbar { position: relative; display: flex; align-items: center; gap: 2px; height: 48px; padding-left: 14px; background: #38516f; }
.wallpaper { position: absolute; left: 733px; right: 0; top: 0; width: calc(100% - 733px); height: 48px; }
.taskbar > button, .tray { position: relative; }
.start { margin-right: 12px; }
.grip { width: 12px; height: 36px; background: radial-gradient(circle at 1px 1px, #c3ccd6 1px, #1d2c3d 2px, transparent 2px) 0 0 / 4px 7px; }
.start + .grip { margin-right: 7px; }
.task { width: 71px; height: 46px; justify-content: center; padding-right: 3px; }
.task.on { border: 1px solid #9aa8b8; background: rgba(160, 175, 195, .35); }
.task.bright { border-color: #f0f4f8; background: #8592a6; }
.task.many { border-right: 4px double #9aa8b8; }
.tray { display: flex; align-items: center; margin-left: auto; padding-right: 19px; gap: 11px; color: #fff; font-size: 14px; line-height: 22px; text-align: center; }
.t-up { margin: 0 6px 0 8px; }
.lang { margin-left: 9px; }
.clock { margin-left: 7px; }
```
